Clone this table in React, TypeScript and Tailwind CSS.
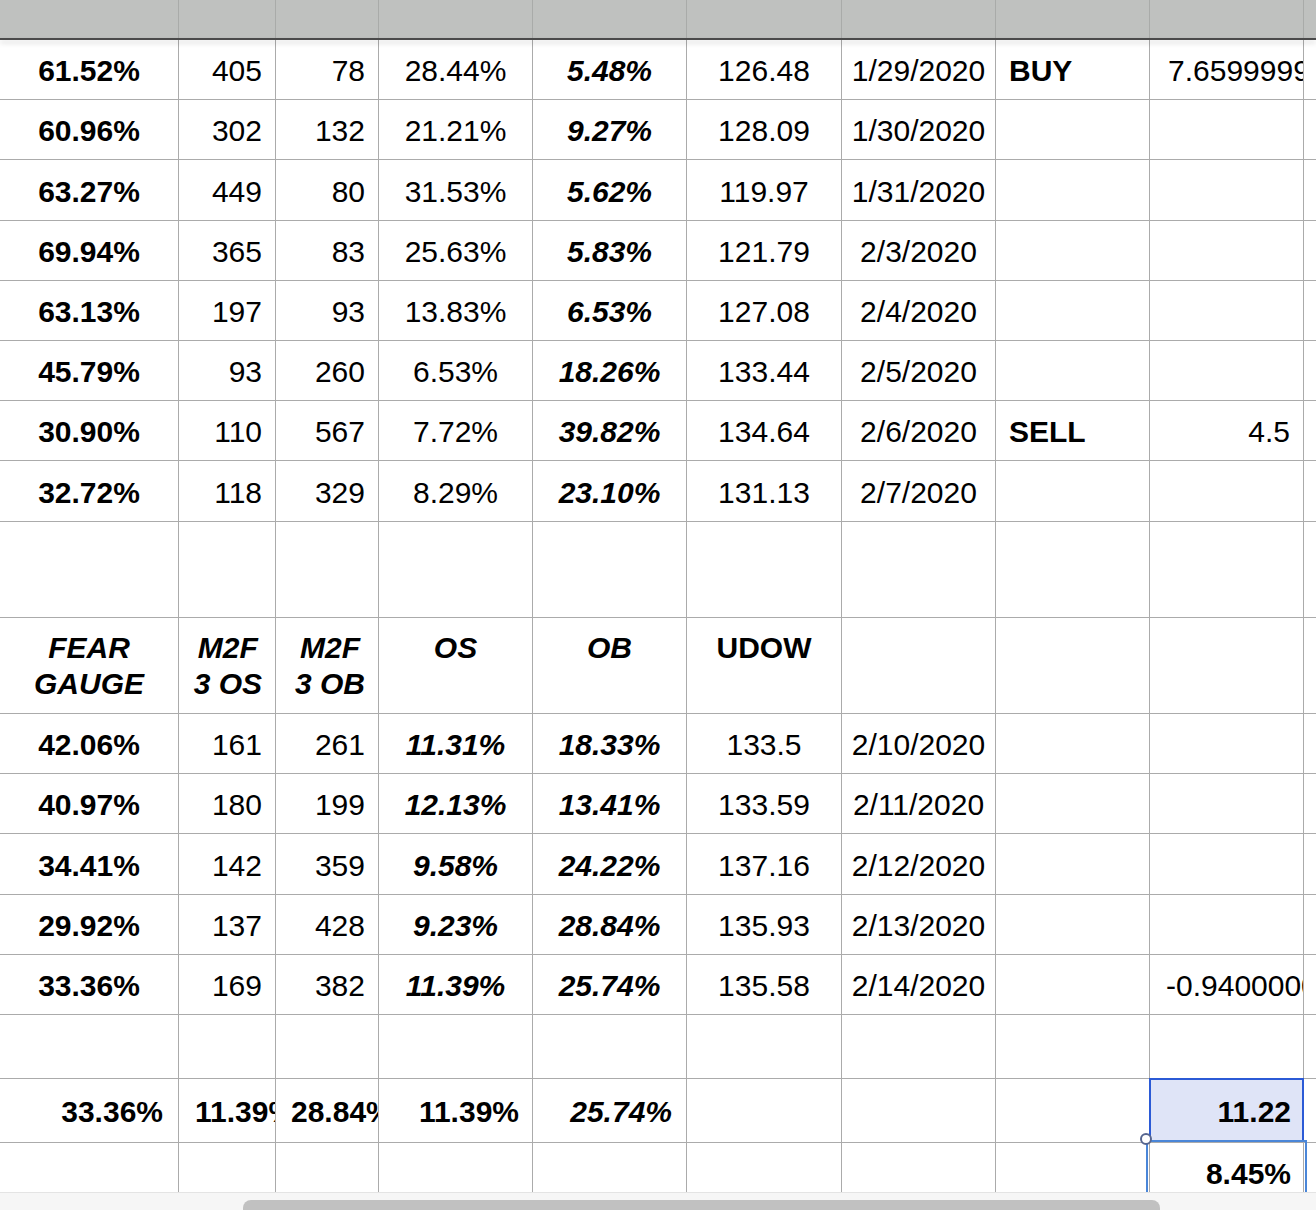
import React from 'react';

type Cell = { t?: string; b?: boolean; i?: boolean; cls?: string };
type Row = { cells: Cell[]; kind?: 'head' | 'sum' | 'tail' | 'blank' };

// default alignment for each column of the sheet
const colAlign = [
  'justify-center',
  'justify-end pr-[13px]',
  'justify-end pr-[13px]',
  'justify-center',
  'justify-center',
  'justify-center',
  'justify-center',
  'justify-start pl-[13px]',
  'justify-end pr-[13px]',
  '',
];

const dataRow = (v: string[], italicOs = false, extra: Cell[] = []): Row => ({
  cells: [
    { t: v[0], b: true },
    { t: v[1] },
    { t: v[2] },
    { t: v[3], b: italicOs, i: italicOs },
    { t: v[4], b: true, i: true },
    { t: v[5] },
    { t: v[6] },
    extra[0] || {},
    extra[1] || {},
    {},
  ],
});

const blank = (): Row => ({ kind: 'blank', cells: Array.from({ length: 10 }, () => ({})) });

const rows: Row[] = [
  dataRow(['61.52%', '405', '78', '28.44%', '5.48%', '126.48', '1/29/2020'], false, [
    { t: 'BUY', b: true },
    { t: '7.6599999999', cls: 'justify-start pl-[18px]' },
  ]),
  dataRow(['60.96%', '302', '132', '21.21%', '9.27%', '128.09', '1/30/2020']),
  dataRow(['63.27%', '449', '80', '31.53%', '5.62%', '119.97', '1/31/2020']),
  dataRow(['69.94%', '365', '83', '25.63%', '5.83%', '121.79', '2/3/2020']),
  dataRow(['63.13%', '197', '93', '13.83%', '6.53%', '127.08', '2/4/2020']),
  dataRow(['45.79%', '93', '260', '6.53%', '18.26%', '133.44', '2/5/2020']),
  dataRow(['30.90%', '110', '567', '7.72%', '39.82%', '134.64', '2/6/2020'], false, [
    { t: 'SELL', b: true },
    { t: '4.5' },
  ]),
  dataRow(['32.72%', '118', '329', '8.29%', '23.10%', '131.13', '2/7/2020']),
  blank(),
  {
    kind: 'head',
    cells: [
      { t: 'FEAR\nGAUGE', b: true, i: true },
      { t: 'M2F\n3 OS', b: true, i: true },
      { t: 'M2F\n3 OB', b: true, i: true },
      { t: 'OS', b: true, i: true },
      { t: 'OB', b: true, i: true },
      { t: 'UDOW', b: true },
      {},
      {},
      {},
      {},
    ],
  },
  dataRow(['42.06%', '161', '261', '11.31%', '18.33%', '133.5', '2/10/2020'], true),
  dataRow(['40.97%', '180', '199', '12.13%', '13.41%', '133.59', '2/11/2020'], true),
  dataRow(['34.41%', '142', '359', '9.58%', '24.22%', '137.16', '2/12/2020'], true),
  dataRow(['29.92%', '137', '428', '9.23%', '28.84%', '135.93', '2/13/2020'], true),
  dataRow(['33.36%', '169', '382', '11.39%', '25.74%', '135.58', '2/14/2020'], true, [
    {},
    { t: '-0.9400000000', cls: 'justify-start pl-[16px]' },
  ]),
  blank(),
  {
    kind: 'sum',
    cells: [
      { t: '33.36%', b: true, cls: 'justify-end pr-[15px]' },
      { t: '11.39%', b: true, cls: 'justify-start pl-[16px]' },
      { t: '28.84%', b: true, cls: 'justify-start pl-[15px]' },
      { t: '11.39%', b: true, cls: 'justify-end pr-[13px]' },
      { t: '25.74%', b: true, i: true, cls: 'justify-end pr-[14px]' },
      {},
      {},
      {},
      { t: '11.22', b: true, cls: 'justify-end pr-[12px]' },
      {},
    ],
  },
  {
    kind: 'tail',
    cells: [{}, {}, {}, {}, {}, {}, {}, {}, { t: '8.45%', b: true, cls: 'justify-end pr-[12px]' }, {}],
  },
];

function SheetCell({ c, col, row }: { c: Cell; col: number; row: Row }) {
  const selected = row.kind === 'sum' && col === 8;
  const below = row.kind === 'tail' && col === 8;
  const vert =
    row.kind === 'head'
      ? 'items-start pt-[12px] text-center'
      : row.kind === 'tail'
        ? 'items-start pt-[13px]'
        : 'items-center pt-[3px]';
  return (
    <div
      className={`relative flex whitespace-pre leading-[36px] ${selected ? 'bg-[#dfe4f7]' : 'bg-white'} ${
        c.cls || colAlign[col]
      } ${vert} ${c.t && !selected && !below ? 'overflow-hidden' : ''} ${c.b ? 'font-bold' : ''} ${
        c.i ? 'italic' : ''
      } ${selected || below ? 'z-10' : ''}`}
    >
      {c.t}
      {selected && <div className="absolute -left-px -top-px -right-px bottom-0 border-2 border-[#2b5ad6]" />}
      {below && (
        <>
          <div className="absolute -left-[4px] -right-[4px] -top-[3px] bottom-0 border-x-2 border-t-2 border-[#4a86d8]" />
          <div className="absolute -left-[10px] -top-[10px] w-[12px] h-[12px] rounded-full bg-white border-2 border-[#56658f]" />
        </>
      )}
    </div>
  );
}

export default function App() {
  const cols = 'grid-cols-[178px_96px_102px_153px_153px_154px_153px_153px_153px_12px]';
  return (
    <div className="w-[1316px] h-[1210px] overflow-hidden bg-white text-black text-[30px] font-['Liberation_Sans',Arial,sans-serif]">
      {/* column header band */}
      <div className={`grid ${cols} gap-px bg-[#a9aba9] h-[38px]`}>
        {Array.from({ length: 10 }).map((_, i) => (
          <div key={i} className="bg-[#bfc1bf]" />
        ))}
      </div>
      <div className="relative z-20 h-[2px] bg-[#4b4b4b] shadow-[0_3px_5px_rgba(0,0,0,0.18)]" />

      <div
        className={`grid ${cols} grid-rows-[59px_59px_60px_59px_59px_59px_59px_60px_95px_95px_59px_59px_60px_59px_59px_63px_63px_49px] gap-px bg-[#ababab]`}
      >
        {rows.map((r, ri) =>
          r.cells.map((c, ci) => <SheetCell key={`${ri}-${ci}`} c={c} col={ci} row={r} />)
        )}
      </div>

      {/* horizontal scroll bar */}
      <div className="relative z-20 h-[18px] bg-[#f6f6f6] border-t border-[#e4e4e4] pt-[7px]">
        <div className="ml-[243px] w-[917px] h-[12px] rounded-t-[8px] bg-[#c1c1c1]" />
      </div>
    </div>
  );
}
